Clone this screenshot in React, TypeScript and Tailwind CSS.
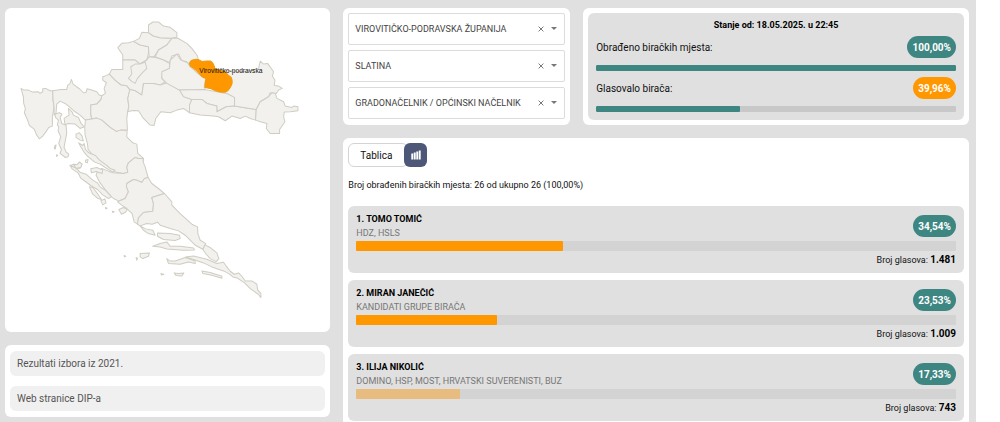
import { useState } from "react";

type Candidate = {
  name: string;
  parties: string;
  percent: number;
  votes: string;
  faded?: boolean;
};

const candidates: Candidate[] = [
  { name: "TOMO TOMIĆ", parties: "HDZ, HSLS", percent: 34.54, votes: "1.481" },
  { name: "MIRAN JANEČIĆ", parties: "KANDIDATI GRUPE BIRAČA", percent: 23.53, votes: "1.009" },
  {
    name: "ILIJA NIKOLIĆ",
    parties: "DOMINO, HSP, MOST, HRVATSKI SUVERENISTI, BUZ",
    percent: 17.33,
    votes: "743",
    faded: true,
  },
];

const filters = [
  { id: "county", label: "Županija", value: "VIROVITIČKO-PODRAVSKA ŽUPANIJA" },
  { id: "city", label: "Grad", value: "SLATINA" },
  { id: "election", label: "Vrsta izbora", value: "GRADONAČELNIK / OPĆINSKI NAČELNIK" },
];

const links = ["Rezultati izbora iz 2021.", "Web stranice DIP-a"];

// north-west counties and the Kvarner islands
const west = [
  "63,265 72,270 85,270 97,276 115,275 120,280 128,275 128,266 137,265 150,272 158,272 159,300 162,320 157,350 157,378 146,382 137,396 128,408 118,416 110,405 103,388 88,376 82,358 73,338 76,325 71,310 70,290",
  "158,272 183,268 200,268 203,255 209,252 214,238 219,252 238,266 250,278 258,277 261,266 275,270 290,275 297,285 305,287 303,298 290,312 272,315 272,340 275,357 256,360 240,345 225,335 210,322 195,310 180,303 170,312 168,338 162,345 162,320 159,300",
  "305,287 316,280 312,265 319,248 308,240 308,230 320,226 328,222 345,240 362,254 380,257 389,270 383,295 386,320 383,334 380,355 382,390 362,390 348,394 330,382 305,360 290,354 275,357 272,340 272,315 290,312 303,298",
  "256,360 275,357 290,354 305,360 330,382 348,394 362,390 381,392 380,410 398,428 410,432 413,460 430,475 429,485 415,475 405,472 385,488 380,500 383,516 370,520 340,515 320,500 300,485 280,468 264,448 262,430 255,405 254,380",
  "353,143 365,130 385,128 400,124 420,135 445,140 445,160 440,180 420,192 405,180 368,180 368,165",
  "400,124 418,115 425,97 445,98 460,108 480,113 515,115 500,135 475,150 465,165 462,170 447,170 445,140 420,135",
  "445,75 458,66 475,66 490,78 510,82 530,98 530,112 515,115 480,113 460,108 445,98",
  "532,114 560,130 575,145 592,168 594,178 572,185 568,192 558,184 545,182 535,162 515,168 508,188 490,180 465,170 475,150 500,135 515,115",
  "368,180 405,180 420,192 440,180 447,170 465,172 490,180 508,190 508,205 488,215 485,235 495,245 480,255 460,250 430,250 425,285 405,272 389,268 380,257 362,254 345,240 328,222 335,208 368,208",
  "392,200 405,192 420,192 435,186 440,205 425,220 412,235 405,250 395,244 385,235 395,222",
  "389,268 405,272 425,285 430,250 460,250 480,255 500,248 538,270 550,288 575,298 568,315 568,338 550,325 530,330 510,338 482,335 467,355 462,376 450,375 430,355 415,332 400,331 383,334 386,320 383,295",
  "165,342 178,338 186,342 180,352 185,370 198,375 200,400 194,430 192,442 198,455 206,462 204,470 196,472 180,460 184,448 176,430 182,410 174,392 176,380 172,375 175,360 166,352",
  "205,325 216,335 220,345 235,352 243,370 252,380 240,385 225,372 205,370 195,374 192,355 207,345",
  "228,402 238,398 246,408 250,422 240,420 228,412",
  "164,438 168,434 166,446 163,446",
  "169,464 173,466 170,469",
  "236,428 248,436 252,430 256,448 266,458 286,466 298,480 318,494 330,505 345,510 338,516 318,504 300,492 284,486 262,468 252,456 240,436",
  "222,492 232,496 238,486 246,492 240,504 226,504 210,496",
];

// Slavonija
const east = [
  "60,180 80,162 92,180 112,188 120,200 145,222 168,235 162,260 165,268 120,270 88,270 50,250 35,235 35,215 58,205",
  "88,270 163,268 215,278 230,280 253,292 253,318 228,320 200,335 200,318 170,310 155,298 125,298 100,290",
  "125,298 155,298 170,310 200,318 200,335 228,320 253,318 280,322 318,328 316,360 300,355 285,348 270,355 245,348 225,362 205,350 190,348 150,345 118,338 118,315",
  "190,208 245,212 290,215 325,205 330,183 340,192 352,190 370,215 366,228 374,240 372,256 385,258 396,265 385,270 378,280 360,278 355,290 330,305 318,328 280,322 253,318 253,292 226,278 200,240",
  "318,328 330,305 355,290 365,278 375,280 380,295 400,305 405,318 425,322 430,318 443,320 443,332 420,335 402,336 400,350 404,365 388,388 388,400 360,400 348,385 350,370 330,365 316,360",
];

// Dalmacija
const south = [
  "249,25 249,35 255,50 264,82 253,85 245,97 230,90 220,88 200,100 199,110 205,125 195,145 175,152 160,145 140,125 118,95 108,75 112,64 125,55 145,63 160,68 190,70 203,66 200,50 205,38 225,22 235,25",
  "264,82 275,100 295,115 313,130 275,142 280,160 278,183 250,187 235,203 232,222 222,215 216,190 200,175 185,165 172,155 195,145 205,125 199,110 200,100 220,88 230,90 245,97 253,85",
  "313,130 335,155 335,165 360,190 395,222 412,230 413,250 420,270 437,280 428,297 405,285 375,255 355,242 330,235 300,225 292,216 276,222 260,220 240,227 232,222 235,203 250,187 278,183 280,160 275,142",
  "434,284 450,292 470,308 476,325 468,334 450,325 438,312 428,298",
  "376,320 400,317 440,327 470,340 490,336 500,350 510,363 522,372 535,368 545,378 555,392 575,392 590,402 592,418 602,430 602,442 594,432 570,415 553,398 530,383 518,380 506,370 490,362 455,350 430,338 400,328",
  "292,248 330,250 358,255 360,265 345,271 310,268 292,258",
  "278,288 300,280 320,275 330,288 360,288 400,293 403,299 370,300 320,296 300,290",
  "240,310 268,308 265,318 248,325 240,320",
  "320,325 328,332 345,332 375,322 405,332 405,340 385,335 360,342 325,340",
  "425,362 450,367 485,378 485,384 455,375 428,370",
  "342,368 355,370 371,368 365,377 348,376",
  "240,227 256,236 278,240 285,255 265,250 250,240",
  "30,46 48,54 60,66 78,72 98,90 112,98 120,110 138,122 154,140 145,145 128,134 112,118 92,106 76,94 62,84 54,68 36,56",
  "88,110 98,112 112,130 124,148 112,144 98,132",
  "122,152 134,146 138,158 128,164",
  "92,56 110,52 128,60 126,70 108,64 94,68",
  "176,178 190,172 202,178 196,186 184,192",
  "40,42 50,44 58,36 66,42 62,52 48,54",
  "76,30 84,28 82,38 76,36",
  "192,316 197,318 193,320",
  "228,322 232,324 230,330",
  "302,370 311,372 304,374",
  "136,172 141,174 137,176",
  "157,183 162,184 158,187",
];

const selectedCounty =
  "M118,190 Q120,180 133,178 Q142,175 155,184 Q165,182 180,183 Q190,187 194,206 Q212,210 225,215 Q234,226 243,232 Q250,247 240,262 Q234,273 225,276 Q210,280 180,265 L164,262 L165,245 L168,235 Q154,232 148,222 Q140,210 120,198 Z";

function CountyMap() {
  return (
    <svg
      viewBox="15 24 975 972"
      className="block w-full"
      role="img"
      aria-label="Karta županija"
      fill="#f2f1ee"
      stroke="#cfccc2"
      strokeWidth="3"
      strokeLinejoin="round"
    >
      <g>
        {west.map((points) => (
          <polygon key={points} points={points} />
        ))}
      </g>
      <g transform="translate(450 0)">
        {east.map((points) => (
          <polygon key={points} points={points} />
        ))}
        <path d={selectedCounty} fill="#ff9800" stroke="#f0980f" />
      </g>
      <g transform="translate(180 450)">
        {south.map((points) => (
          <polygon key={points} points={points} />
        ))}
      </g>
      <text
        x="692"
        y="219"
        textAnchor="middle"
        fontSize="20"
        fill="#111"
        stroke="none"
        fontFamily="Liberation Sans, Arial, sans-serif"
      >
        Virovitičko-podravska
      </text>
    </svg>
  );
}

function Filter({ id, label, value }: { id: string; label: string; value: string }) {
  const [selected, setSelected] = useState(value);

  return (
    <div className="relative">
      <select
        id={id}
        aria-label={label}
        value={selected}
        onChange={(e) => setSelected(e.target.value)}
        className="block h-8 w-full appearance-none rounded-xs border border-[#dcdcdc] bg-white pr-10 pl-1.5 text-[9px] leading-4 text-[#444]"
      >
        <option value="" />
        <option value={value}>{value}</option>
      </select>
      <button
        type="button"
        aria-label="Očisti"
        onClick={() => setSelected("")}
        className="absolute inset-y-0 right-[18px] flex w-3 items-center justify-center text-[#777]"
      >
        <svg viewBox="0 0 6 6" className="size-1.5" stroke="currentColor" strokeWidth="1">
          <path d="M.6.6 5.4 5.4M5.4.6.6 5.4" />
        </svg>
      </button>
      <svg
        viewBox="0 0 6 3"
        className="pointer-events-none absolute top-3.5 right-2 h-[3px] w-1.5"
        fill="#777"
      >
        <path d="M0 0h6L3 3z" />
      </svg>
    </div>
  );
}

function StatusRow({ label, value, percent, badge }: { label: string; value: string; percent: number; badge: string }) {
  return (
    <div>
      <div className="flex items-center justify-between">
        <span className="text-[10px]">{label}</span>
        <span className={`flex h-[22px] items-center rounded-full px-[5px] text-[10px] font-bold text-white ${badge}`}>
          {value}
        </span>
      </div>
      <div className="mt-[7px] h-1.5 overflow-hidden rounded-[1px] bg-[#c8c8c8]">
        <div className="h-full rounded-[1px] bg-[#3e8682]" style={{ width: `${percent}%` }} />
      </div>
    </div>
  );
}

function CandidateCard({ candidate, rank }: { candidate: Candidate; rank: number }) {
  return (
    <li className="rounded-md bg-[#e0e0e0] px-2 pb-1">
      <div className="flex h-[35px] items-end justify-between">
        <div className="pb-px">
          <h3 className="text-[9px] leading-[14px] font-bold text-black">
            {rank}. {candidate.name}
          </h3>
          <p className="text-[9px] leading-[14px] text-[#777]">{candidate.parties}</p>
        </div>
        <span className="mb-1 flex h-[22px] items-center rounded-full bg-[#3e8682] px-[5px] text-[10px] font-bold text-white">
          {candidate.percent.toFixed(2).replace(".", ",")}%
        </span>
      </div>
      <div className="h-2.5 rounded-[1px] bg-[#d3d3d3]">
        <div
          className={`h-full rounded-[1px] ${candidate.faded ? "bg-[#e8bc7e]" : "bg-[#ff9800]"}`}
          style={{ width: `${candidate.percent}%` }}
        />
      </div>
      <p className="text-right text-[9px] leading-[18px]">
        Broj glasova: <strong className="text-[10px] font-bold text-black">{candidate.votes}</strong>
      </p>
    </li>
  );
}

export default function App() {
  const [view, setView] = useState("chart");

  return (
    <div className="h-screen overflow-hidden bg-white pr-6 font-[Roboto,sans-serif] text-[#111]">
      <main className="grid min-h-screen grid-cols-[13fr_25fr] items-start gap-[13px] bg-[#e0e0e0] pt-2 pr-[7px] pl-[5px]">
        <aside className="flex flex-col gap-[13px]">
          <div className="rounded-md bg-white">
            <CountyMap />
          </div>
          <nav className="flex flex-col gap-2.5 rounded-md bg-white px-[5px] py-1.5">
            {links.map((link) => (
              <a
                key={link}
                href="#"
                className="flex h-[25px] items-center rounded-md bg-[#f0f0f0] px-[7px] text-[10px] text-[#555]"
              >
                {link}
              </a>
            ))}
          </nav>
        </aside>

        <div className="flex flex-col gap-[13px]">
          <div className="grid grid-cols-[10fr_17fr] gap-[13px]">
            <section className="flex flex-col gap-[5px] rounded-md bg-white p-[5px]">
              {filters.map((filter) => (
                <Filter key={filter.id} {...filter} />
              ))}
            </section>
            <section className="rounded-md bg-white p-[5px]">
              <div className="flex h-full flex-col gap-1.5 rounded-md bg-[#e0e0e0] px-2 pt-1.5 pb-2">
                <h2 className="-mb-0.5 text-center text-[9px] leading-[13px] font-bold text-black">
                  Stanje od: 18.05.2025. u 22:45
                </h2>
                <StatusRow label="Obrađeno biračkih mjesta:" value="100,00%" percent={100} badge="bg-[#3e8682]" />
                <StatusRow label="Glasovalo birača:" value="39,96%" percent={39.96} badge="bg-[#ff9800]" />
              </div>
            </section>
          </div>

          <section className="rounded-md bg-white p-[5px]">
            <div className="flex">
              <button
                type="button"
                aria-pressed={view === "table"}
                onClick={() => setView("table")}
                className="-mr-1 h-6 w-15 rounded-md border border-[#d4d4d4] bg-white pr-1 text-[10px]"
              >
                Tablica
              </button>
              <button
                type="button"
                aria-label="Grafikon"
                aria-pressed={view === "chart"}
                onClick={() => setView("chart")}
                className="flex h-6 w-[23px] items-center justify-center rounded-md bg-[#4d5879] text-white"
              >
                <svg viewBox="0 0 10 10" className="size-2.5" fill="currentColor">
                  <path d="M.3 3.4h1.9v6H.3zM2.8 2.6h1.9v6.8H2.8zM5.3 1.6h1.9v7.8H5.3zM7.8.6h1.9v8.8H7.8z" />
                </svg>
              </button>
            </div>
            <p className="py-[11px] text-[9px] leading-[14px]">
              Broj obrađenih biračkih mjesta: 26 od ukupno 26 (100,00%)
            </p>
            <ol className="mt-[3px] flex flex-col gap-[7px]">
              {candidates.map((candidate, i) => (
                <CandidateCard key={candidate.name} candidate={candidate} rank={i + 1} />
              ))}
            </ol>
          </section>
        </div>
      </main>
    </div>
  );
}
